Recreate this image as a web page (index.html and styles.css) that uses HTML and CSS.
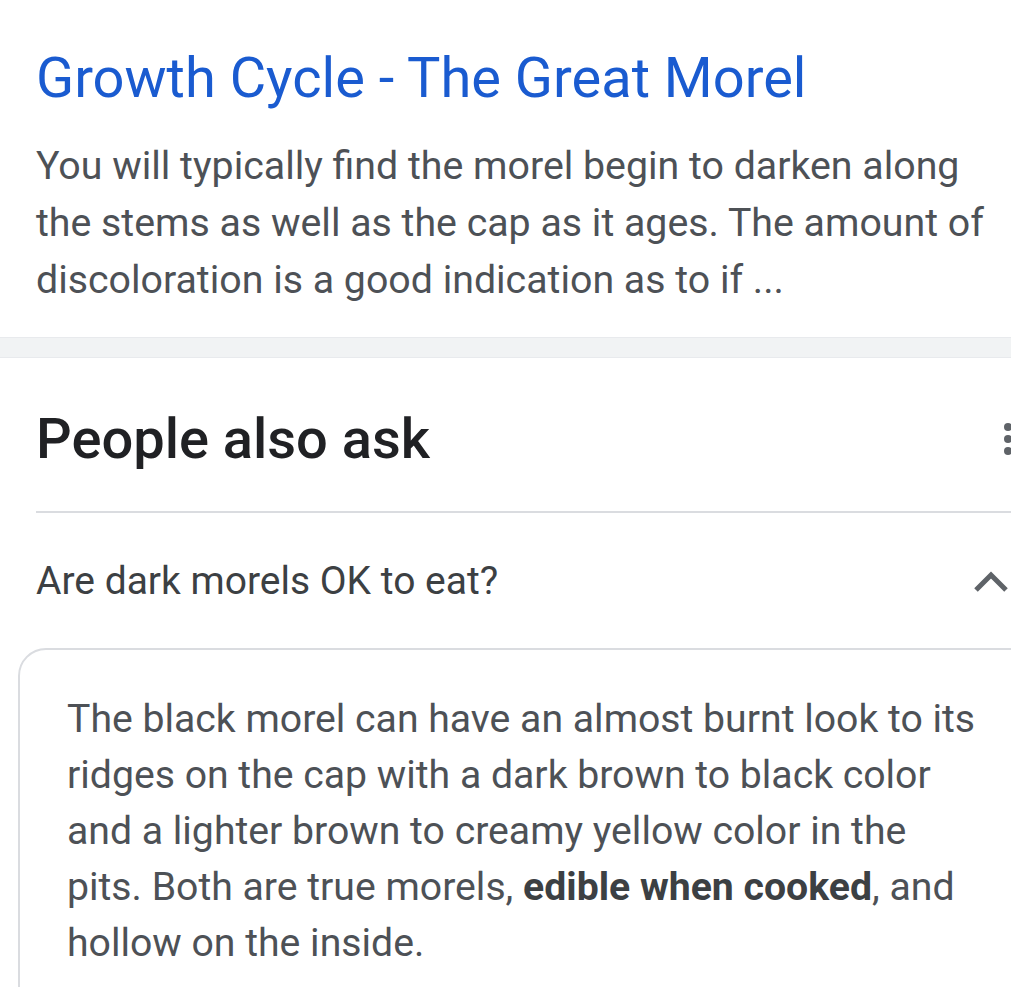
FILE: index.html
```html
<!DOCTYPE html>
<html lang="en">
<head>
  <meta charset="UTF-8" />
  <meta name="viewport" content="width=device-width, initial-scale=1.0" />
  <title>People also ask</title>
  <link rel="stylesheet" href="styles.css">
</head>
<body>
  <!-- Search result -->
  <div class="result">
    <a class="result-title" href="#">Growth Cycle - The Great Morel</a>
    <p class="snippet">You will typically find the morel begin to darken along the stems as well as the cap as it ages. The amount of discoloration is a good indication as to if ...</p>
  </div>

  <div class="band"></div>

  <!-- People also ask -->
  <div class="paa">
    <div class="paa-head">
      <h2>People also ask</h2>
      <span class="dots"><i></i><i></i><i></i></span>
    </div>

    <div class="question">
      <span>Are dark morels OK to eat?</span>
      <svg class="chevron" viewBox="0 0 36 24" width="36" height="24">
        <path d="M3 21 L18 6 L33 21" fill="none" stroke="#5f6368" stroke-width="5" />
      </svg>
    </div>
  </div>

  <div class="answer">
    <p>The black morel can have an almost burnt look to its ridges on the cap with a dark brown to black color and a lighter brown to creamy yellow color in the pits. Both are true morels, <b>edible when cooked</b>, and hollow on the inside.</p>
  </div>
</body>
</html>
```

FILE: styles.css
```css
body {
  margin: 0;
  font-family: Roboto, "Noto Sans", Arial, sans-serif;
  background: #fff;
  overflow: hidden;
}
.result {
  padding: 48px 20px 28px 36px;
}
.result-title {
  display: block;
  font-size: 56px;
  line-height: 60px;
  color: #1a5bd0;
  text-decoration: none;
}
.snippet {
  margin: 30px 0 0;
  width: 965px;
  font-size: 39.3px;
  line-height: 57px;
  color: #4d5156;
}
.band {
  height: 19px;
  background: #f1f3f4;
  border-top: 1px solid #e8eaed;
  border-bottom: 1px solid #e8eaed;
}
.paa {
  padding-left: 36px;
}
.paa-head {
  box-sizing: border-box;
  display: flex;
  justify-content: space-between;
  align-items: center;
  height: 155px;
  padding-top: 8px;
  border-bottom: 2px solid #dadce0;
}
.paa-head h2 {
  margin: 0;
  font-size: 56px;
  font-weight: 500;
  color: #202124;
}
.dots {
  display: flex;
  flex-direction: column;
  gap: 4px;
  margin-right: -1px;
}
.dots i {
  width: 8px;
  height: 8px;
  border-radius: 50%;
  background: #5f6368;
}
.question {
  display: flex;
  justify-content: space-between;
  align-items: center;
  height: 135px;
  font-size: 39px;
  color: #3c4043;
}
.chevron {
  margin-right: 2px;
}
.answer {
  margin: 0 -40px 0 18px;
  border: 2px solid #dadce0;
  border-radius: 28px;
  padding: 41px 0 0 47px;
  height: 600px;
}
.answer p {
  margin: 0;
  width: 914px;
  font-size: 39.2px;
  line-height: 56px;
  color: #4d5156;
}
.answer b {
  font-weight: 700;
  color: #3c4043;
}
```
